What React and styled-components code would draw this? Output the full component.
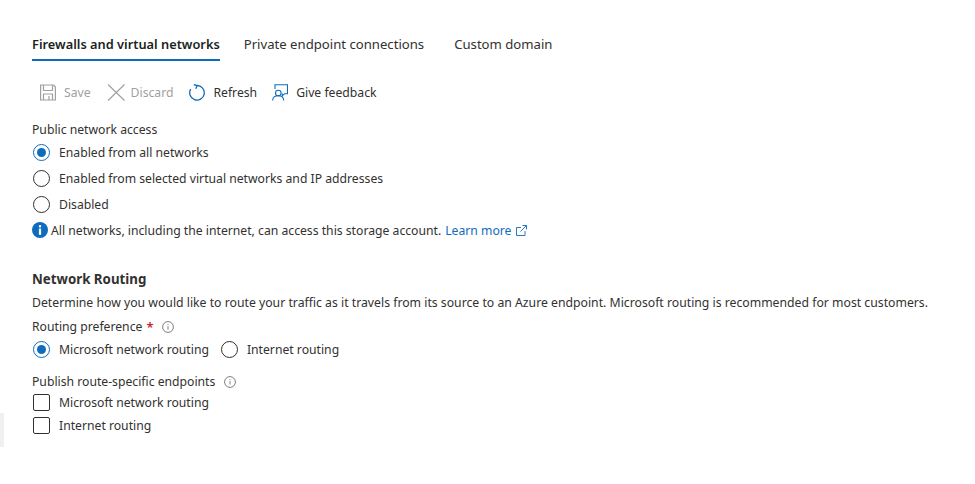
import React from "react"
import styled, { createGlobalStyle } from "styled-components"

const GlobalStyle = createGlobalStyle`
  html, body {
    margin: 0;
    padding: 0;
    background: #fff;
  }
  body {
    font-family: "Noto Sans", "Open Sans", sans-serif;
    font-size: 12.2px;
    color: #323130;
  }
`

const Page = styled.div`
  position: relative;
  width: 975px;
  height: 484px;
  padding: 32px 0 0 32px;
  box-sizing: border-box;
  overflow: hidden;
`

const EdgeStrip = styled.div`
  position: absolute;
  left: 0;
  top: 413px;
  width: 4px;
  height: 34px;
  background: #f0f0f0;
`

const Tabs = styled.div`
  display: flex;
  height: 30px;
`

const Tab = styled.div`
  height: 27px;
  line-height: 24px;
  margin-right: ${(p) => p.$right || 0}px;
  font-size: ${(p) => (p.$active ? "12.8px" : "13.15px")};
  font-weight: ${(p) => (p.$active ? 600 : 400)};
  color: ${(p) => (p.$active ? "#201f1e" : "#323130")};
  border-bottom: ${(p) => (p.$active ? "2px solid #0f6cbd" : "none")};
`

const Toolbar = styled.div`
  display: flex;
  align-items: center;
  height: 20px;
  margin: 20px 0 0 8px;
`

const ToolButton = styled.div`
  display: flex;
  align-items: center;
  gap: ${(p) => p.$gap || 8}px;
  margin-right: ${(p) => p.$right || 16}px;
  color: ${(p) => (p.$disabled ? "#a19f9d" : "#323130")};
`

const ToolIcon = styled.svg`
  width: 16px;
  height: 17px;
  flex: none;
`

const Section = styled.div`
  display: flex;
  flex-direction: column;
  align-items: flex-start;
`

const FieldLabel = styled.div`
  display: flex;
  align-items: center;
  height: 18px;
  line-height: 18px;
  margin-top: ${(p) => p.$top || 0}px;
`

const Required = styled.span`
  color: #c4262e;
  font-weight: 600;
  font-size: 13px;
  margin-left: 4px;
`

const HelpIcon = styled.svg`
  width: 12px;
  height: 12px;
  margin-left: ${(p) => p.$left || 9}px;
`

const Option = styled.label`
  display: flex;
  align-items: center;
  gap: 9px;
  height: 18px;
  margin-top: ${(p) => p.$top || 0}px;
  margin-left: 1px;
  margin-right: ${(p) => p.$right || 0}px;
`

const OptionRow = styled.div`
  display: flex;
  margin-top: 4px;
`

const Radio = styled.span`
  width: 17px;
  height: 17px;
  box-sizing: border-box;
  border-radius: 50%;
  border: 1.2px solid ${(p) => (p.$checked ? "#0f6cbd" : "#323130")};
  display: flex;
  align-items: center;
  justify-content: center;
  &::after {
    content: "";
    display: ${(p) => (p.$checked ? "block" : "none")};
    width: 9px;
    height: 9px;
    border-radius: 50%;
    background: #0f6cbd;
  }
`

const Checkbox = styled.span`
  width: 17px;
  height: 17px;
  box-sizing: border-box;
  border: 1.2px solid #323130;
  border-radius: 2px;
`

const InfoLine = styled.div`
  display: flex;
  align-items: center;
  height: 18px;
  margin-top: 8px;
`

const InfoBadge = styled.svg`
  width: 16px;
  height: 16px;
  margin-right: 3px;
`

const LearnMore = styled.a`
  color: #0f6cbd;
  margin-left: 4px;
  display: flex;
  align-items: center;
  gap: 5px;
`

const SectionTitle = styled.div`
  font-size: 13.3px;
  font-weight: 700;
  line-height: 18px;
  margin-top: 31px;
  color: #323130;
`

const Description = styled.div`
  font-size: 12.24px;
  line-height: 18px;
  margin-top: 6px;
`

const SaveIcon = () => (
  <ToolIcon viewBox="0 0 16 17" fill="none" stroke="#a19f9d" strokeWidth="1.2">
    <path d="M.6 1h13l1.800 2v13H.6z" />
    <path d="M3.500 1v5.500h9V1M3.500 16v-6h9v6M9 12v4" />
  </ToolIcon>
)

const DiscardIcon = () => (
  <ToolIcon viewBox="0 0 16 17" fill="none" stroke="#a19f9d" strokeWidth="1.1" overflow="visible">
    <path d="M0 .5l16.500 16M16.500 .5L0 16.500" />
  </ToolIcon>
)

const RefreshIcon = () => (
  <ToolIcon viewBox="0 0 16 17" fill="none" stroke="#0f6cbd" strokeWidth="1.3">
    <path d="M8 1.500a7.300 7.300 0 1 1-6.300 3.600" />
    <path d="M4.800 .6l3.200 .9-1.100 3.200" />
  </ToolIcon>
)

const FeedbackIcon = () => (
  <ToolIcon viewBox="0 0 16 17" fill="none" stroke="#0f6cbd" strokeWidth="1.1">
    <path d="M3 5V.7h12.500v9h-3l-2.200 2.200V9.500" />
    <circle cx="6.300" cy="9" r="2.800" />
    <path d="M.6 16.500c.2-3 2.400-4.700 5.700-4.700s5.300 1.700 5.500 4.700" />
  </ToolIcon>
)

const ExternalIcon = () => (
  <svg width="11" height="11" viewBox="0 0 11 11" fill="none" stroke="#0f6cbd" strokeWidth="0.9">
    <path d="M5 2.500H.5v8H9V6" />
    <path d="M6.500.5H10.500V4.500M10.500.5L4.500 6.500" />
  </svg>
)

const Help = ({ left }) => (
  <HelpIcon $left={left} viewBox="0 0 12 12" fill="none" stroke="#605e5c" strokeWidth="0.8">
    <circle cx="6" cy="6" r="5.400" />
    <path d="M6 5.200v3.400M6 3.200v1" />
  </HelpIcon>
)

export default function App() {
  return (
    <Page>
      <GlobalStyle />
      <EdgeStrip />
      <Tabs>
        <Tab $active $right={24}>Firewalls and virtual networks</Tab>
        <Tab $right={30}>Private endpoint connections</Tab>
        <Tab>Custom domain</Tab>
      </Tabs>

      <Toolbar>
        <ToolButton $disabled $right={17}><SaveIcon />Save</ToolButton>
        <ToolButton $disabled $gap={7}><DiscardIcon />Discard</ToolButton>
        <ToolButton $right={15}><RefreshIcon />Refresh</ToolButton>
        <ToolButton><FeedbackIcon />Give feedback</ToolButton>
      </Toolbar>

      <Section>
        <FieldLabel $top={19}>Public network access</FieldLabel>
        <Option $top={4}><Radio $checked />Enabled from all networks</Option>
        <Option $top={8}><Radio />Enabled from selected virtual networks and IP addresses</Option>
        <Option $top={8}><Radio />Disabled</Option>
        <InfoLine>
          <InfoBadge viewBox="0 0 16 16">
            <circle cx="8" cy="8" r="8" fill="#0f6cbd" />
            <rect x="6.900" y="6.600" width="2.200" height="6.200" fill="#fff" />
            <rect x="6.900" y="3.200" width="2.200" height="2.200" fill="#fff" />
          </InfoBadge>
          All networks, including the internet, can access this storage account.
          <LearnMore>Learn more <ExternalIcon /></LearnMore>
        </InfoLine>
      </Section>

      <Section>
        <SectionTitle>Network Routing</SectionTitle>
        <Description>
          Determine how you would like to route your traffic as it travels from its source to an Azure endpoint. Microsoft routing is recommended for most customers.
        </Description>
        <FieldLabel $top={6}>Routing preference<Required>*</Required><Help /></FieldLabel>
        <OptionRow>
          <Option $right={11}><Radio $checked />Microsoft network routing</Option>
          <Option><Radio />Internet routing</Option>
        </OptionRow>
        <FieldLabel $top={15}>Publish route-specific endpoints<Help $left={10} /></FieldLabel>
        <Option $top={2}><Checkbox />Microsoft network routing</Option>
        <Option $top={5}><Checkbox />Internet routing</Option>
      </Section>
    </Page>
  )
}
